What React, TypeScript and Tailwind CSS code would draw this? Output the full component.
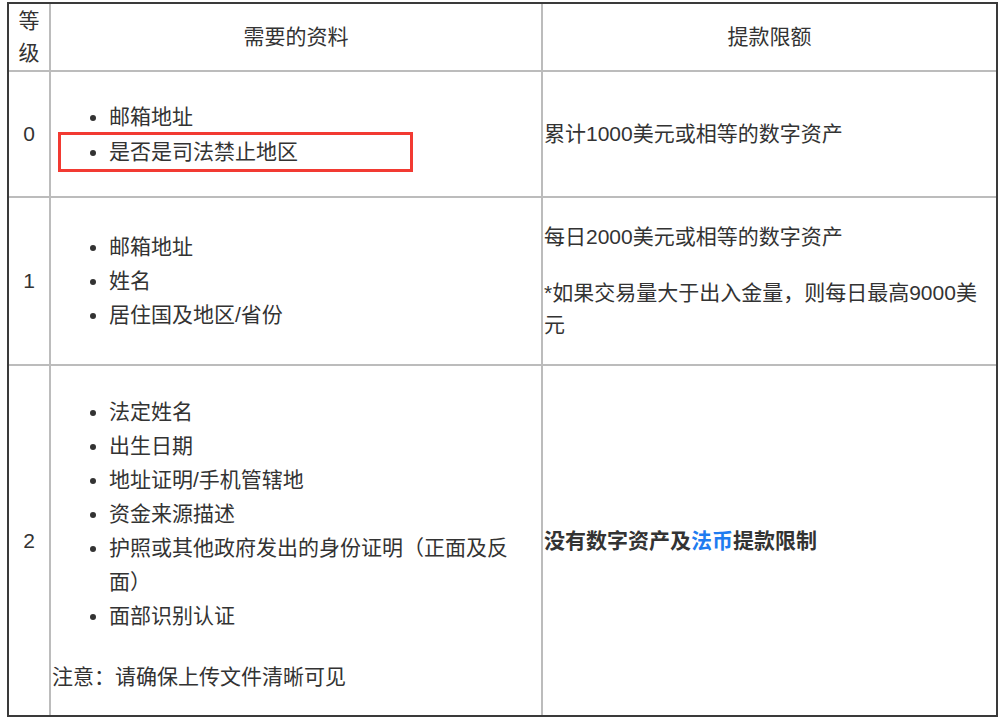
export default function App() {
  const cell = "border-2 border-[#bcbcbc] align-middle p-0";
  return (
    <div
      className="min-h-[722px] bg-white pt-[2px] pl-[7px] text-[21px] leading-[34px] text-[#333]"
      style={{ fontFamily: '"Liberation Sans", "Noto Sans CJK SC", sans-serif' }}
    >
      <div className="relative h-[715px] w-[991px] border-2 border-[#3a3a3a]">
        <table className="h-full w-full table-fixed border-collapse border-hidden">
          <colgroup>
            <col className="w-[41px]" />
            <col className="w-[492px]" />
            <col />
          </colgroup>
          <thead>
            <tr className="h-[67px]">
              <th className={`${cell} font-normal leading-[32px]`}>等级</th>
              <th className={`${cell} font-normal`}>需要的资料</th>
              <th className={`${cell} font-normal`}>提款限额</th>
            </tr>
          </thead>
          <tbody>
            <tr className="h-[126px]">
              <td className={`${cell} text-center`}>0</td>
              <td className={`${cell} px-[1px]`}>
                <ul className="list-disc pl-[57px] pr-[8px] leading-[35px]">
                  <li>邮箱地址</li>
                  <li>是否是司法禁止地区</li>
                </ul>
              </td>
              <td className={`${cell} pl-[1px] pr-[8px]`}>累计1000美元或相等的数字资产</td>
            </tr>
            <tr className="h-[168px]">
              <td className={`${cell} text-center`}>1</td>
              <td className={`${cell} px-[1px]`}>
                <ul className="list-disc pl-[57px] pr-[8px]">
                  <li>邮箱地址</li>
                  <li>姓名</li>
                  <li>居住国及地区/省份</li>
                </ul>
              </td>
              <td className={`${cell} pl-[1px] pr-[8px] leading-[32px]`}>
                <p className="mb-[24px]">每日2000美元或相等的数字资产</p>
                <p>*如果交易量大于出入金量，则每日最高9000美元</p>
              </td>
            </tr>
            <tr>
              <td className={`${cell} text-center`}>2</td>
              <td className={`${cell} px-[1px]`}>
                <ul className="mt-[8px] mb-[27px] list-disc pl-[57px] pr-[8px]">
                  <li>法定姓名</li>
                  <li>出生日期</li>
                  <li>地址证明/手机管辖地</li>
                  <li>资金来源描述</li>
                  <li>护照或其他政府发出的身份证明（正面及反面）</li>
                  <li>面部识别认证</li>
                </ul>
                <p>注意：请确保上传文件清晰可见</p>
              </td>
              <td className={`${cell} pl-[1px] pr-[8px] font-bold`}>
                没有数字资产及<span className="text-[#1f7cf0]">法币</span>提款限制
              </td>
            </tr>
          </tbody>
        </table>
        {/* red annotation box */}
        <div className="pointer-events-none absolute left-[49px] top-[128px] h-[40px] w-[355px] border-[3px] border-[#f23a32]" />
      </div>
    </div>
  );
}
